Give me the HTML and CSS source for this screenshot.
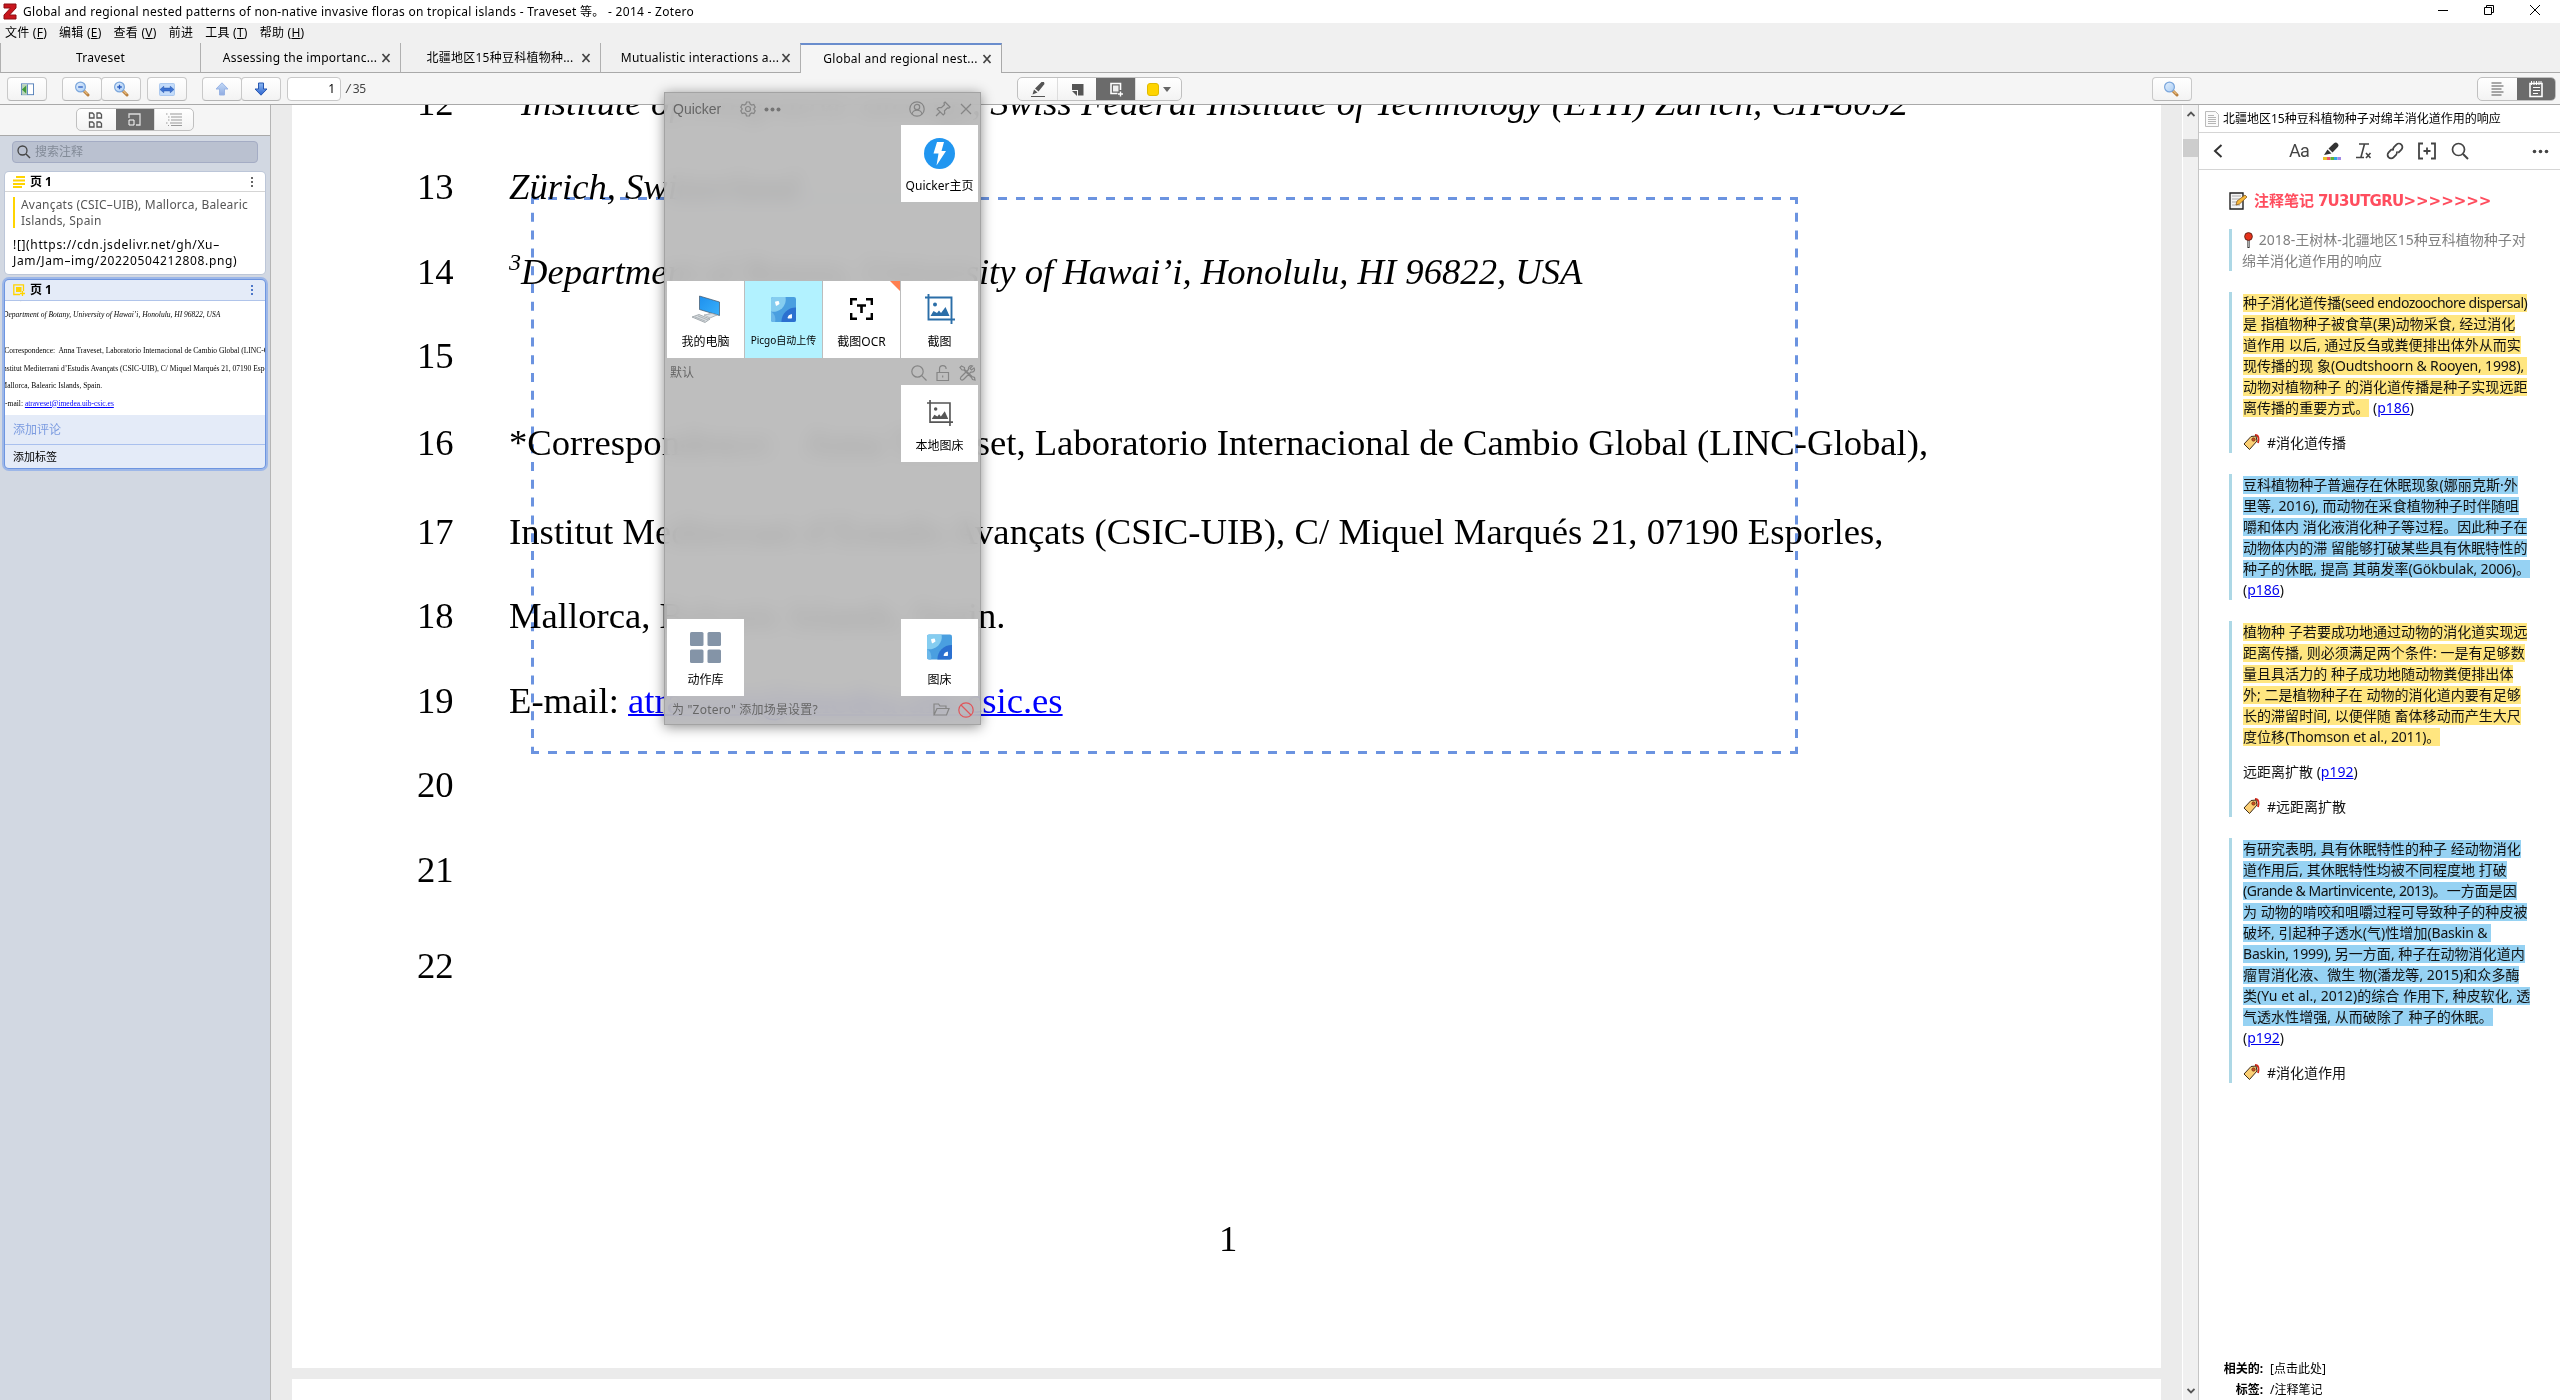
FILE: index.html
```html
<!DOCTYPE html>
<html lang="zh-CN">
<head>
<meta charset="utf-8">
<title>Zotero</title>
<link rel="stylesheet" href="styles.css">
</head>
<body>
<svg width="0" height="0" class="defs" aria-hidden="true">
  <defs>
    <linearGradient id="lens" x1="0" y1="0" x2="1" y2="1"><stop offset="0" stop-color="#e4f0fd"/><stop offset="1" stop-color="#a9cdf5"/></linearGradient>
    <linearGradient id="arrow" x1="0" y1="0" x2="0" y2="1"><stop offset="0" stop-color="#8db9f2"/><stop offset="1" stop-color="#2c63cf"/></linearGradient>
    <linearGradient id="screen" x1="0" y1="0" x2="1" y2="1"><stop offset="0" stop-color="#1e90ee"/><stop offset="1" stop-color="#38b0fb"/></linearGradient>
    <symbol id="mag" viewBox="0 0 16 16"><path d="M9.500 9.500l4.500 4.500" stroke="#b9803f" stroke-width="3" stroke-linecap="round"/><path d="M9.500 9.200l4 4" stroke="#e9bd7f" stroke-width="1.200"/><circle cx="6.500" cy="6" r="4.900" fill="url(#lens)" stroke="#7ba6dc" stroke-width="1.200"/></symbol>
    <symbol id="pic" viewBox="0 0 24 24"><rect width="24" height="24" rx="2" fill="#4a9fe0"/><path d="M2 0h12a12 12 0 0 1-14 14V2a2 2 0 0 1 2-2z" fill="#85cdf0"/><path d="M24 10v12a2 2 0 0 1-2 2H10c0-8 6-14 14-14z" fill="#2b70d0"/><path d="M0 14q5 3 4 10H2a2 2 0 0 1-2-2z" fill="#6bb8ea"/><path d="M4.500 5l2.500-.5.500 2L5.200 7.800zM17.500 18l2-1v3h-3z" fill="#fff" stroke="#fff" stroke-linejoin="round"/></symbol>
    <symbol id="crop" viewBox="0 0 30 30"><path d="M3.500 0v25.500H30M0 3.500h26.500V30" fill="none" stroke="currentColor" stroke-width="1.900"/><circle cx="10" cy="10.500" r="2" fill="currentColor"/><path d="M5.500 22l3-5 3.500 2 2-2.500 2 2.500 4.500-6 4 9z" fill="currentColor"/></symbol>
    <symbol id="tag" viewBox="0 0 17 17"><path d="M12 1c4 0 4 4 3 8" fill="none" stroke="#d0281c" stroke-width="1.800"/><path d="M1 10L8 2.500l5-.5 1 5-7.500 8.500z" fill="#fbcf74" stroke="#3c2c1a" stroke-linejoin="round"/><circle cx="10.500" cy="5.500" r="1.700" fill="#d0501c" stroke="#4a2210" stroke-width=".6"/></symbol>
    <symbol id="x" viewBox="0 0 10 10"><path d="M1.500 1l7 8M8.500 1l-7 8" stroke="#444" stroke-width="1.700"/></symbol>
  </defs>
</svg>
<header class="titlebar">
  <svg class="logo" viewBox="0 0 14 17"><path d="M1 1h12v4L6.500 12H13v4H1v-4L7.500 5H1z" fill="#c8161d" stroke="#8d0d12" stroke-width="1"/></svg>
  <span class="title">Global and regional nested patterns of non-native invasive floras on tropical islands - Traveset 等。 - 2014 - Zotero</span>
  <div class="wincontrols">
    <svg width="12" height="12" viewBox="0 0 12 12"><path d="M1 6.500h10" stroke="#000"/></svg>
    <svg width="12" height="12" viewBox="0 0 12 12"><path d="M1.500 3.500h7v7h-7zM3.500 3.500v-2h7v7h-2" fill="none" stroke="#000"/></svg>
    <svg width="12" height="12" viewBox="0 0 12 12"><path d="M1 1l10 10M11 1L1 11" stroke="#000"/></svg>
  </div>
</header>
<nav class="menubar">
  <span>文件 (<u>F</u>)</span><span>编辑 (<u>E</u>)</span><span>查看 (<u>V</u>)</span><span>前进</span><span>工具 (<u>T</u>)</span><span>帮助 (<u>H</u>)</span>
</nav>
<div class="tabs">
  <div class="tab first"><span>Traveset</span></div>
  <div class="tab"><span>Assessing the importanc...</span><svg><use href="#x"/></svg></div>
  <div class="tab"><span>北疆地区15种豆科植物种...</span><svg><use href="#x"/></svg></div>
  <div class="tab"><span>Mutualistic interactions a...</span><svg><use href="#x"/></svg></div>
  <div class="tab active"><span>Global and regional nest...</span><svg><use href="#x"/></svg></div>
  <div class="tabfill"></div>
</div>
<div class="toolbar">
  <div class="tools-left">
    <button class="btn"><svg width="13" height="13" viewBox="0 0 15 14"><rect x=".5" y=".5" width="14" height="12.500" fill="#fff" stroke="#4a78b5"/><path d="M1 1h6v12H1z" fill="#b9d4b9"/><path d="M7.500 1v12" stroke="#4a78b5"/><path d="M1 7l5-4.500v9z" fill="#3f9a3a"/></svg></button>
    <div class="btngroup zoomers"><button class="btn"><svg width="16" height="16" viewBox="0 0 16 16"><use href="#mag"/><path d="M4.200 6h4.600" stroke="#2a5cc0" stroke-width="1.300"/></svg></button><button class="btn"><svg width="16" height="16" viewBox="0 0 16 16"><use href="#mag"/><path d="M4.200 6h4.600M6.500 3.700v4.600" stroke="#2a5cc0" stroke-width="1.300"/></svg></button></div>
    <button class="btn fit"><svg width="16" height="13" viewBox="0 0 17 14"><rect x=".5" y=".5" width="16" height="13" rx="1" fill="#c4dcfa" stroke="#a5c5ee"/><path d="M1 7l4-3.500v2h7v-2L16 7l-4 3.500v-2H5v2z" fill="#3d73d3" stroke="#2756b0" stroke-width=".6"/></svg></button>
    <div class="btngroup pager"><button class="btn"><svg width="14" height="14" viewBox="0 0 14 14" opacity=".5"><path d="M7 .8l6 6.200h-3.500v6h-5V7H1z" fill="url(#arrow)" stroke="#3d73d3"/></svg></button><button class="btn"><svg width="14" height="14" viewBox="0 0 14 14"><path d="M7 13.200L1 7h3.500V1h5v6H13z" fill="url(#arrow)" stroke="#2756b0"/></svg></button></div>
    <div class="pagebox">1</div><span class="total"><i>/</i> 35</span>
  </div>
  <div class="segments annot">
    <button><svg width="16" height="16" viewBox="0 0 16 16"><path d="M1 15.500h14" stroke="#555"/><path d="M2.500 13.500l1.500-5 3.500 3zM5 7.500L11.500 1h2.500l.5 2-6 7.500z" fill="#555"/></svg></button>
    <button><svg width="13" height="13" viewBox="0 0 13 13"><path d="M1 1h11.500v11.500H7V7H1z" fill="#555"/><path d="M1 8h5v5z" fill="#555"/></svg></button>
    <button class="on"><svg width="15" height="15" viewBox="0 0 15 15"><path d="M8.500 11.500H2v-10h9.500v6.500" fill="none" stroke="#fff" stroke-width="1.600"/><path d="M4 3.500h5.500v6H4z" fill="#f0f0f0"/><path d="M11.500 9.500v5M9 12h5" stroke="#fff" stroke-width="1.400"/></svg></button>
    <button class="color"><i></i><b></b></button>
  </div>
  <div class="tools-right">
    <button class="btn look"><svg width="16" height="16"><use href="#mag"/></svg></button>
    <div class="segments panes">
      <button><svg width="13" height="14" viewBox="0 0 13 14"><path d="M.5 1h10M.5 4h12M.5 7h10M.5 10h12M.5 13h10" stroke="#555" stroke-width="1.200"/></svg></button>
      <button class="on"><svg width="14" height="17" viewBox="0 0 14 17"><path d="M1 2.500h12v13H1z" fill="none" stroke="#fff" stroke-width="1.600"/><path d="M2.500 0v4M5 0v4M7.500 0v4M10 0v4M12 0v3" stroke="#fff"/><path d="M4 6.500h7M4 9.500h7M4 12.500h5" stroke="#fff" stroke-width="1.200"/></svg></button>
    </div>
  </div>
</div>
<div class="main">
  <aside class="sidebar">
    <div class="sidehead"><div class="segments views">
      <button><svg width="15" height="16" viewBox="0 0 15 16"><path d="M1.500 1h3l1.500 1.500V6H1.500zM9 1h3l1.500 1.500V6H9zM1.500 10h3L6 11.500V15H1.500zM9 10h3l1.500 1.500V15H9z" fill="none" stroke="#555" stroke-width="1.300"/></svg></button>
      <button class="on"><svg width="13" height="13" viewBox="0 0 13 13"><path d="M1 5V1h11v11H8" fill="none" stroke="#ddd" stroke-width="1.300"/><path d="M1 7h5v5H1z" fill="none" stroke="#fff"/></svg></button>
      <button><svg width="16" height="13" viewBox="0 0 16 13"><path d="M0 1h1.500M4 1h12M2 4h1.500M5 4h11M2 7h1.500M5 7h11M0 10h1.500M4 10h12M2 12.500h1M5 12.500h11" stroke="#999"/></svg></button>
    </div></div>
    <div class="search"><svg width="14" height="14" viewBox="0 0 14 14"><circle cx="5.500" cy="5.500" r="4.500" fill="none" stroke="#444" stroke-width="1.300"/><path d="M9 9l4 4" stroke="#444" stroke-width="1.500"/></svg><span>搜索注释</span></div>
    <article class="card">
      <div class="cardhead"><svg width="12" height="12" viewBox="0 0 12 12"><path d="M3 1h9M0 4.500h12M0 8h12M0 11h9" stroke="#ffd400" stroke-width="1.900"/></svg><b>页 1</b><i class="dots"></i></div>
      <blockquote>Avançats (CSIC–UIB), Mallorca, Balearic<br>Islands, Spain</blockquote>
      <p>![](https://cdn.jsdelivr.net/gh/Xu–<br>Jam/Jam–img/20220504212808.png)</p>
    </article>
    <article class="card selected">
      <div class="cardhead"><svg width="12" height="12" viewBox="0 0 12 12"><path d="M7 10.500H.8V.8h9.700V7" fill="none" stroke="#ffd400" stroke-width="1.300"/><path d="M3 3h5.500v5H3z" fill="#ffd400"/><path d="M9.500 7v5M7 9.500h5" stroke="#ffd400" stroke-width="1.300"/></svg><b>页 1</b><i class="dots"></i></div>
      <div class="thumb">
        <em class="cut">Zürich, Switzerland</em>
        <em class="dept"><sup>3</sup>Department of Botany, University of Hawai’i, Honolulu, HI 96822, USA</em>
        <span class="t16">*Correspondence:&nbsp; Anna Traveset, Laboratorio Internacional de Cambio Global (LINC-Global),</span>
        <span>Institut Mediterrani d’Estudis Avançats (CSIC-UIB), C/ Miquel Marqués 21, 07190 Esporles,</span>
        <span>Mallorca, Balearic Islands, Spain.</span>
        <span>E-mail: <u>atraveset@imedea.uib-csic.es</u></span>
      </div>
      <div class="comment">添加评论</div>
      <div class="addtag">添加标签</div>
    </article>
  </aside>
  <section class="viewer">
    <div class="page">
      <div class="lines">
        <b>12</b><em class="l12"><sup>2</sup>Institute of Integrative Biology, Swiss Federal Institute of Technology (ETH) Zürich, CH-8092</em>
        <b>13</b><em>Zürich, Switzerland</em>
        <b>14</b><em><sup>3</sup>Department of Botany, University of Hawai’i, Honolulu, HI 96822, USA</em>
        <b>15</b><span></span>
        <b>16</b><span><span class="lead">*Correspondence:</span> Anna Traveset, Laboratorio Internacional de Cambio Global (LINC-Global),</span>
        <b>17</b><span class="l17">Institut Mediterrani d’Estudis Avançats (CSIC-UIB), C/ Miquel Marqués 21, 07190 Esporles,</span>
        <b>18</b><span>Mallorca, Balearic Islands, Spain.</span>
        <b>19</b><span>E-mail: <u>atraveset@imedea.uib-csic.es</u></span>
        <b>20</b><span></span>
        <b>21</b><span></span>
        <b>22</b><span></span>
      </div>
      <div class="pageno">1</div>
      <svg class="selection" width="1267" height="557"><path d="M0 1.500H1267M0 555.500H1267" stroke-dasharray="9 9" stroke-dashoffset="1"/><path d="M1.500 0V557M1265.500 0V557" stroke-dasharray="9 8.800" stroke-dashoffset="2"/></svg>
    </div>
    <div class="page next"></div>
  </section>
  <div class="scrollbar"><svg width="8" height="6" viewBox="0 0 8 6"><path d="M.5 5L4 1.500 7.500 5" fill="none" stroke="#555" stroke-width="1.800"/></svg><i></i><svg class="down" width="8" height="6" viewBox="0 0 8 6"><path d="M.5 1L4 4.500 7.500 1" fill="none" stroke="#555" stroke-width="1.800"/></svg></div>
  <aside class="notes">
    <div class="notetitle"><svg width="14" height="16" viewBox="0 0 14 16"><path d="M.5.500h10l3 3v12H.5z" fill="#fafafa" stroke="#bbb"/><path d="M3 4.500h6M3 6.500h8M3 8.500h8M3 10.500h8M3 12.500h8" stroke="#b5b5b5"/></svg><span>北疆地区15种豆科植物种子对绵羊消化道作用的响应</span></div>
    <div class="notebar">
      <svg class="back" width="10" height="14" viewBox="0 0 10 14"><path d="M8.500 1L2 7l6.500 6" fill="none" stroke="#333" stroke-width="2"/></svg>
      <div class="noteicons">
        <span class="aa">Aa</span>
        <svg width="20" height="18" viewBox="0 0 20 18"><path d="M2 13l3.500-5.500 4 4zM6.500 6.500L12 1.200a2.700 2.700 0 0 1 3.800 3.800L10.500 10.500z" fill="#333"/><path d="M1 16.500h4" stroke="#e8c22a" stroke-width="3"/><path d="M5 16.500h3.500" stroke="#f0566a" stroke-width="3"/><path d="M8.500 16.500H12" stroke="#5fb236" stroke-width="3"/><path d="M12 16.500h3.500" stroke="#2ea8e5" stroke-width="3"/><path d="M15.500 16.500H19" stroke="#a28ae5" stroke-width="3"/></svg>
        <svg width="17" height="18" viewBox="0 0 17 18"><path d="M4 2h10M9.500 2L6 15M1 15.500h8M11 11l4.500 5M15.500 11L11 16" fill="none" stroke="#444" stroke-width="1.600"/></svg>
        <svg width="18" height="18" viewBox="0 0 18 18"><g fill="none" stroke="#444" stroke-width="1.800" transform="rotate(-45 9 9)"><path d="M8 5.500H3.500a3.500 3.500 0 0 0 0 7H7a3.500 3.500 0 0 0 3-2"/><path d="M10 12.500h4.500a3.500 3.500 0 0 0 0-7H11a3.500 3.500 0 0 0-3 2"/></g></svg>
        <svg width="20" height="18" viewBox="0 0 20 18"><path d="M6 1.500H2v15h4M14 1.500h4v15h-4M6.500 9h7M10 5.500v7" fill="none" stroke="#444" stroke-width="1.800"/></svg>
        <svg width="18" height="18" viewBox="0 0 18 18"><circle cx="7.500" cy="7.500" r="6" fill="none" stroke="#444" stroke-width="1.700"/><path d="M12 12l5 5" stroke="#444" stroke-width="2"/></svg>
      </div>
      <svg class="more" width="17" height="5" viewBox="0 0 17 5"><circle cx="2.500" cy="2.500" r="1.800"/><circle cx="8.500" cy="2.500" r="1.800"/><circle cx="14.500" cy="2.500" r="1.800"/></svg>
    </div>
    <div class="notebody">
      <h1><svg width="19" height="18" viewBox="0 0 19 18"><path d="M1 1h13v16H1z" fill="#f4f4f4" stroke="#222" stroke-width="1.400"/><path d="M3 4h9M3 7h8M3 10h6M3 13h8" stroke="#aaa"/><path d="M7 13l1-4 8-6 2 2-7.500 7z" fill="#f7b93b" stroke="#7a4a12" stroke-width=".7"/></svg><span>注释笔记 <span class="key">7U3UTGRU</span><span class="gt">&gt;&gt;&gt;&gt;&gt;&gt;&gt;</span></span></h1>
      <blockquote class="grey"><svg width="9" height="17" viewBox="0 0 9 17"><path d="M4.500 8v8" stroke="#333" stroke-width="2.200"/><path d="M4.500 8v7" stroke="#ccc" stroke-width=".8"/><circle cx="4.500" cy="4.500" r="3.900" fill="#e5321c" stroke="#4a1a10" stroke-width=".8"/></svg> 2018-王树林-北疆地区15种豆科植物种子对<br>绵羊消化道作用的响应</blockquote>
      <blockquote>
        <p class="y"><mark>种子消化道传播<span class="k1">(seed endozoochore dispersal)</span></mark><br><mark>是 指植物种子被食草(果)动物采食, 经过消化</mark><br><mark>道作用 以后, 通过反刍或粪便排出体外从而实</mark><br><mark>现传播的现 象<span class="k2">(Oudtshoorn &amp; Rooyen, 1998), </span></mark><br><mark>动物对植物种子 的消化道传播是种子实现远距</mark><br><mark>离传播的重要方式。</mark> (<a>p186</a>)</p>
        <p><svg class="tag" width="17" height="17"><use href="#tag"/></svg>#消化道传播</p>
      </blockquote>
      <blockquote>
        <p class="b"><mark>豆科植物种子普遍存在休眠现象(娜丽克斯·外</mark><br><mark>里等, 2016), 而动物在采食植物种子时伴随咀</mark><br><mark>嚼和体内 消化液消化种子等过程。因此种子在</mark><br><mark>动物体内的滞 留能够打破某些具有休眠特性的</mark><br><mark>种子的休眠, 提高 其萌发率<span class="k2">(Gökbulak, 2006)</span>。</mark><br>(<a>p186</a>)</p>
      </blockquote>
      <blockquote>
        <p class="y"><mark>植物种 子若要成功地通过动物的消化道实现远</mark><br><mark>距离传播, 则必须满足两个条件: 一是有足够数</mark><br><mark>量且具活力的 种子成功地随动物粪便排出体</mark><br><mark>外; 二是植物种子在 动物的消化道内要有足够</mark><br><mark>长的滞留时间, 以便伴随 畜体移动而产生大尺</mark><br><mark>度位移<span class="k2">(Thomson et al., 2011)</span>。</mark></p>
        <p>远距离扩散 (<a>p192</a>)</p>
        <p><svg class="tag" width="17" height="17"><use href="#tag"/></svg>#远距离扩散</p>
      </blockquote>
      <blockquote>
        <p class="b"><mark>有研究表明, 具有休眠特性的种子 经动物消化</mark><br><mark>道作用后, 其休眠特性均被不同程度地 打破</mark><br><mark><span class="k1">(Grande &amp; Martinvicente, 2013)</span>。一方面是因</mark><br><mark>为 动物的啃咬和咀嚼过程可导致种子的种皮被</mark><br><mark>破坏, 引起种子透水(气)性增加<span class="k2">(Baskin &amp; </span></mark><br><mark><span class="k2">Baskin, 1999), </span>另一方面, 种子在动物消化道内</mark><br><mark>瘤胃消化液、微生 物(潘龙等, 2015)和众多酶</mark><br><mark>类(Yu et al., 2012)的综合 作用下, 种皮软化, 透</mark><br><mark>气透水性增强, 从而破除了 种子的休眠。</mark><br>(<a>p192</a>)</p>
        <p><svg class="tag" width="17" height="17"><use href="#tag"/></svg>#消化道作用</p>
      </blockquote>
    </div>
    <dl class="meta"><dt>相关的:</dt><dd>[点击此处]</dd><dt>标签:</dt><dd>/注释笔记</dd></dl>
  </aside>
</div>

<div class="quicker">
  <div class="qhead"><span>Quicker</span>
    <svg class="gear" width="16" height="16" viewBox="0 0 16 16"><path d="M6.500 1h3l.6 2 1.600 1 2.100-.5 1.400 2.600L13.800 8l1.400 1.900-1.400 2.600-2.100-.5-1.600 1-.6 2h-3l-.6-2-1.600-1-2.100.5L.8 9.900 2.200 8 .8 6.100l1.400-2.600 2.100.5 1.600-1z"/><circle cx="8" cy="8" r="2.500"/></svg>
    <svg class="qdots" width="17" height="5" viewBox="0 0 17 5"><circle cx="2.500" cy="2.500" r="2"/><circle cx="8.500" cy="2.500" r="2"/><circle cx="14.500" cy="2.500" r="2"/></svg>
    <svg class="user" width="16" height="16" viewBox="0 0 16 16"><circle cx="8" cy="8" r="7.200"/><circle cx="8" cy="6" r="2.700"/><path d="M3 13c1-5 9-5 10 0"/></svg>
    <svg class="pin" width="16" height="16" viewBox="0 0 16 16"><path d="M10 1l5 5-1 1-1.500-.2-3 3 .2 2.700-1.500 1.500-6-6L3.700 6.500l2.700.2 3-3L9 2zM5 11l-4 4"/></svg>
    <svg class="close" width="12" height="12" viewBox="0 0 12 12"><path d="M1 1l10 10M11 1L1 11"/></svg>
  </div>
  <div class="qgrid top">
    <div class="tile c4 r1"><svg width="31" height="31" viewBox="0 0 31 31"><circle cx="15.500" cy="15.500" r="15.500" fill="#2196f0"/><path d="M13 4h7l-2.500 9H22L12.500 27.500l2-12H9.500z" fill="#fff"/></svg><span>Quicker主页</span></div>
    <div class="tile c1 r3"><svg width="30" height="28" viewBox="0 0 30 28"><path d="M8.500 1l20 6v13.500l-20-6z" fill="url(#screen)" stroke="#456" stroke-width=".7"/><path d="M18 18l5 1.500-1 2.500-6-1.500z" fill="#c4ccd2"/><path d="M13 20l8-1.500 5 1.500-7 3z" fill="#dfe3e6" stroke="#9aa2a8" stroke-width=".7"/><path d="M1 22l7-2.500 11 4.500-5 3.500z" fill="#d8dcdf" stroke="#8a9298" stroke-width=".7"/><path d="M4 22l10 4M7 21l10 4" stroke="#9aa2a8" stroke-width=".7"/></svg><span>我的电脑</span></div>
    <div class="tile c2 r3 hot"><svg width="25" height="25"><use href="#pic"/></svg><span>Picgo自动上传</span></div>
    <div class="tile c3 r3 corner"><svg width="23" height="22" viewBox="0 0 23 22"><path d="M1.200 7V1.200H7M16 1.200h5.800V7M21.800 15v5.800H16M7 20.800H1.200V15" fill="none" stroke="#000" stroke-width="2.400"/><path d="M7 7.500h9M11.500 7.500V15" stroke="#000" stroke-width="2.600"/></svg><span>截图OCR</span></div>
    <div class="tile c4 r3 blue"><svg width="30" height="30"><use href="#crop"/></svg><span>截图</span></div>
  </div>
  <div class="qbar"><span>默认</span>
    <svg width="16" height="16" viewBox="0 0 16 16"><circle cx="6.500" cy="6.500" r="5.700"/><path d="M10.700 10.700L15.500 15.500"/></svg>
    <svg width="14" height="16" viewBox="0 0 14 16"><path d="M1 7.500h11.500v8H1zM3.500 7.500V4a3.300 3.300 0 0 1 6.600 0M6.700 10.500v2"/></svg>
    <svg width="17" height="16" viewBox="0 0 17 16"><path d="M1 2.500L2.500 1l3 1.500v2l7.500 7 2.500 1 .5 2.500-2.500-.5-1-2L5 5H3zM15 3l-2.500 2L11 3.500 13.500 1C11 0 9 2 9.500 4.500l-7.500 7.500c-1.500 2 .5 4 2.500 2.500L12 7c2.500.5 4.500-1.500 3-4z"/></svg>
  </div>
  <div class="qgrid bottom">
    <div class="tile c4 r1 dark"><svg width="26" height="26"><use href="#crop"/></svg><span>本地图床</span></div>
    <div class="tile c1 r4 library"><svg width="31" height="31" viewBox="0 0 31 31"><rect width="13.500" height="14" rx="1.500"/><rect x="17.500" width="13.500" height="14" rx="1.500"/><rect y="17.500" width="13.500" height="13.500" rx="1.500"/><rect x="17.500" y="17.500" width="13.500" height="13.500" rx="1.500"/></svg><span>动作库</span></div>
    <div class="tile c4 r4"><svg width="25" height="26"><use href="#pic"/></svg><span>图床</span></div>
  </div>
  <div class="qfoot"><span>为 "Zotero" 添加场景设置?</span>
    <svg width="17" height="13" viewBox="0 0 17 13"><path d="M1 12V1h4.500l1.500 2h6v2.500M1 12l3-6.500h12L13.500 12z"/></svg>
    <svg class="ban" width="16" height="16" viewBox="0 0 16 16"><circle cx="8" cy="8" r="7.200"/><path d="M3 3l10 10"/></svg>
  </div>
</div>
</body>
</html>
```
FILE: styles.css
```css
* { box-sizing: border-box; }
html, body { margin: 0; height: 1400px; overflow: hidden; }
body { display: flex; flex-direction: column; background: #f0f0f0; color: #000; font: 12px/16px "Noto Sans", "Noto Sans CJK SC", sans-serif; white-space: nowrap; }
.defs { position: absolute; }
svg { flex: none; }
button { appearance: none; border: 0; margin: 0; padding: 0; background: none; display: flex; align-items: center; justify-content: center; }

.titlebar { height: 23px; background: #fff; display: flex; align-items: center; padding: 0 19px 0 3px; flex: none; }
.logo { width: 14px; height: 17px; margin-right: 6px; }
.title { letter-spacing: .28px; }
.wincontrols { margin-left: auto; display: flex; gap: 34px; margin-top: -3px; }
.menubar { height: 20px; display: flex; gap: 12px; padding: 2px 5px; flex: none; letter-spacing: .25px; }

.tabs { height: 30px; display: flex; flex: none; }
.tab { width: 200px; border-left: 1px solid #b0b0b0; border-bottom: 1px solid #a9a9a9; display: flex; align-items: center; justify-content: center; position: relative; padding: 0 9px 0 18px; }
.tab span { flex: 1; text-align: center; letter-spacing: .25px; }
.tab svg { width: 10px; height: 10px; }
.tab.first { padding: 0; }
.tab.active { width: 202px; background: #f5f5f5; border-top: 2px solid #6a8dcd; border-right: 1px solid #a9a9a9; border-bottom: 0; }
.tabfill { flex: 1; border-bottom: 1px solid #a9a9a9; }

.toolbar { height: 32px; background: #f5f5f5; border-bottom: 1px solid #a9a9a9; display: flex; align-items: center; flex: none; padding: 1px 4px 0 7px; }
.tools-left { width: 1010px; display: flex; align-items: center; }
.btn { width: 40px; height: 24px; border: 1px solid #c9c9c9; border-bottom-color: #b5b5b5; border-radius: 4px; background: linear-gradient(#fff, #f3f3f3); }
.btngroup { display: flex; }
.btngroup .btn + .btn { margin-left: -1px; }
.zoomers { margin-left: 15px; }
.fit { margin-left: 6px; }
.pager { margin-left: 15px; }
.pagebox { width: 54px; height: 24px; margin-left: 6px; border: 1px solid #c9c9c9; border-radius: 4px; background: #fff; text-align: right; padding: 3px 5px; }
.total { margin-left: 5px; color: #444; letter-spacing: -.3px; }
.segments { display: flex; height: 24px; border: 1px solid #c0c0c0; border-radius: 5px; background: linear-gradient(#fff, #f3f3f3); overflow: hidden; }
.segments button { width: 39px; border-left: 1px solid #ddd; }
.segments button:first-child { border-left: 0; }
.segments .on { background: #6b6b6b; border-color: #6b6b6b; }
.annot { width: 165px; }
.annot .color { flex: 1; gap: 4px; }
.color i { width: 12px; height: 13px; background: #ffd400; border: 1px solid #e0ba00; border-radius: 3px; }
.color b { border: 4px solid transparent; border-top: 5px solid #666; border-bottom: 0; }
.tools-right { margin-left: auto; display: flex; gap: 285px; }
.look { padding-right: 2px; }
.panes { width: 79px; }
.panes button { width: 39px; }

.main { flex: 1; display: flex; min-height: 0; }
.sidebar { width: 271px; background: #d2d8e2; border-right: 1px solid #b5b5b5; flex: none; display: flex; flex-direction: column; }
.sidehead { height: 31px; background: #f5f5f5; border-bottom: 1px solid #a9a9a9; padding: 3px 76px; }
.views { width: 118px; height: 23px; }
.views button { padding-right: 1px; }
.sidebar .search { margin: 5px 12px 0; height: 22px; border: 1px solid #a4acc4; border-radius: 4px; background: #bac1d0; color: #838b98; display: flex; align-items: center; gap: 4px; padding-left: 4px; font-size: 12px; }
.card { margin: 9px 5px 0; width: 260px; height: 102px; background: #fff; border-radius: 4px; box-shadow: 0 0 0 1px #bcc6d8; font: 12px/16px "Noto Sans", "Noto Sans CJK SC", sans-serif; }
.cardhead { height: 20px; border-bottom: 1px solid #d5d5d5; display: flex; align-items: center; padding: 0 12px 0 8px; gap: 5px; }
.dots { margin-left: auto; width: 2px; height: 10px; background: linear-gradient(#666 2px, transparent 2px 4px, #666 4px 6px, transparent 6px 8px, #666 8px); }
.card blockquote { margin: 5px 8px 0; border-left: 2px solid #ffd400; padding-left: 6px; height: 31px; color: #555; letter-spacing: .2px; }
.card p { margin: 9px 8px 0; letter-spacing: .65px; }
.card.selected { margin-top: 6px; height: 188px; background: #e4ebf8; box-shadow: 0 0 0 1px #6d95e0, 0 0 0 3px #9db7e8; overflow: hidden; }
.selected .cardhead { border-color: #b0c4ea; height: 21px; }
.selected .dots { background: linear-gradient(#4d77c9 2px, transparent 2px 4px, #4d77c9 4px 6px, transparent 6px 8px, #4d77c9 8px); }
.thumb { height: 114px; background: #fff; overflow: hidden; display: flex; flex-direction: column; font: 7.500px/17.300px "Liberation Serif", serif; }
.thumb > * { margin-left: -4.500px; height: 17.300px; flex: none; }
.thumb .cut { margin-top: -12px; }
.thumb .dept { height: 35.500px; }
.thumb .t16 { height: 18.300px; }
.thumb sup { font-size: 5px; line-height: 0; }
.thumb u { color: #00f; }
.comment { height: 30px; padding: 7px 8px; border-bottom: 1px solid #a9c0ee; color: #7b9be0; font-size: 12px; }
.addtag { padding: 4px 8px; font-size: 11px; }

.viewer { flex: 1; background: #ebebeb; padding-left: 21px; padding-right: 21px; overflow: hidden; }
.page { position: relative; height: 1263px; background: #fff; overflow: hidden; font: 36.650px/40px "Liberation Serif", serif; }
.page.next { margin-top: 11px; }
.lines { display: grid; grid-template-columns: 92px 1fr; padding-left: 125px; margin-top: -22px; grid-template-rows: 84px 84.500px 84.500px 86.500px 89px 84.500px 84.500px 84.500px 84.500px 96px 84px; }
.lines b { font-weight: 400; }
.lines sup { font-size: 24px; line-height: 0; vertical-align: 14px; }
.lines u { color: #00f; text-decoration-thickness: 2px; }
.l12 { letter-spacing: .06px; }
.l17 { letter-spacing: .05px; }
.lead { padding-right: 21px; }
.pageno { margin: 189px 0 0 927px; }
.selection { position: absolute; left: 239px; top: 92px; stroke: #6b93e0; stroke-width: 3; fill: none; mix-blend-mode: multiply; }
.scrollbar { width: 16px; background: #f0f0f0; border-left: 1px solid #fff; display: flex; flex-direction: column; align-items: center; padding: 6px 0; flex: none; }
.scrollbar i { width: 15px; height: 18px; background: #cdcdcd; margin-top: 22px; }
.scrollbar .down { margin-top: auto; }

.notes { width: 362px; background: #fff; border-left: 1px solid #c5c5c5; flex: none; display: flex; flex-direction: column; }
.notetitle { height: 28px; border-bottom: 1px solid #d5d5d5; display: flex; align-items: center; gap: 4px; padding-left: 6px; }
.notebar { height: 37px; border-bottom: 1px solid #d5d5d5; display: flex; align-items: center; padding: 0 11px 0 14px; }
.noteicons { display: flex; align-items: center; gap: 13.500px; margin-left: 66px; }
.aa { font: 18px/18px "Roboto", sans-serif; color: #444; width: 19px; letter-spacing: -.8px; }
.more { margin-left: auto; fill: #444; }
.notebody { padding: 19px 10px 0 30px; font: 14px/21px "Noto Sans", "Noto Sans CJK SC", sans-serif; color: #111; }
.notebody h1 { margin: 0 0 17px; font-size: 15px; line-height: 23px; color: #ff4d5e; display: flex; align-items: center; gap: 6px; }
.key, .gt { font: 700 15px/20px "DejaVu Sans", sans-serif; }
.key { letter-spacing: -.75px; }
.notebody blockquote { margin: 0 0 21px; border-left: 3px solid #add8e6; padding-left: 11px; }
.notebody .grey { color: #808080; padding-left: 10px; }
.grey svg { vertical-align: -4px; margin: 0 2px; }
.notebody p { margin: 0 0 14px; }
.notebody p:last-child { margin: 0; }
mark { color: inherit; display: inline-block; height: 18px; line-height: 18px; white-space: pre; letter-spacing: .04px; }
.k1 { letter-spacing: -.5px; }
.k2 { letter-spacing: -.18px; }
.y mark { background: #ffe680; }
.b mark { background: #96d2f3; }
.notebody a { color: #00e; text-decoration: underline; }
.tag { vertical-align: -3px; margin-right: 7px; }
.meta { margin: auto 0 0; display: grid; grid-template-columns: 64px 1fr; column-gap: 7px; line-height: 21px; }
.meta dt { text-align: right; font-weight: 700; }
.meta dd { margin: 0; }

.quicker { position: absolute; left: 664px; top: 92px; width: 317px; height: 633px; border: 1px solid #a3a3a3; background: rgba(183, 183, 183, .9); backdrop-filter: blur(9px); box-shadow: 0 2px 12px rgba(0, 0, 0, .45); padding: 0 2px; color: #666; }
.quicker svg { fill: none; stroke: #858585; stroke-width: 1.200; }
.quicker .tile svg { stroke: none; }
.quicker .library svg { fill: #8494a7; }
.qhead { height: 32px; display: flex; align-items: center; padding: 0 6px; font: 14px/20px "Liberation Sans", sans-serif; }
.gear { margin-left: 19px; }
.quicker .qdots { margin-left: 8px; fill: #757575; stroke: none; }
.user { margin-left: auto; }
.pin { margin-left: 10px; }
.close { margin-left: 9px; }
.qgrid { display: grid; grid-template-columns: repeat(4, 77px); gap: 1px; }
.top { grid-template-rows: repeat(3, 77px); }
.bottom { grid-template-rows: repeat(4, 77px); }
.tile { background: #fff; color: #000; display: flex; flex-direction: column; align-items: center; position: relative; padding: 4px 0 7px; }
.tile svg { margin: auto; }
.tile span { line-height: 18px; }
.c1 { grid-column: 1; } .c2 { grid-column: 2; } .c3 { grid-column: 3; } .c4 { grid-column: 4; }
.r1 { grid-row: 1; } .r3 { grid-row: 3; } .r4 { grid-row: 4; }
.hot { background: #b2f2ff; font-size: 10px; padding: 6px 0 9px; }
.corner::after { content: ""; position: absolute; right: 0; top: 0; border: 5px solid #ff7f50; border-left-color: transparent; border-bottom-color: transparent; }
.blue { color: #2b6ea8; }
.dark { color: #555; }
.tile.blue span, .tile.dark span { color: #000; }
.qbar { height: 27px; display: flex; align-items: center; gap: 9px; padding: 2px 2px 0 3px; }
.qbar span { margin-right: auto; }
.qfoot { height: 27px; display: flex; align-items: center; gap: 8px; padding: 0 4px 0 5px; }
.qfoot span { margin-right: auto; letter-spacing: .2px; }
.quicker .ban { stroke: #e0555a; }
```
